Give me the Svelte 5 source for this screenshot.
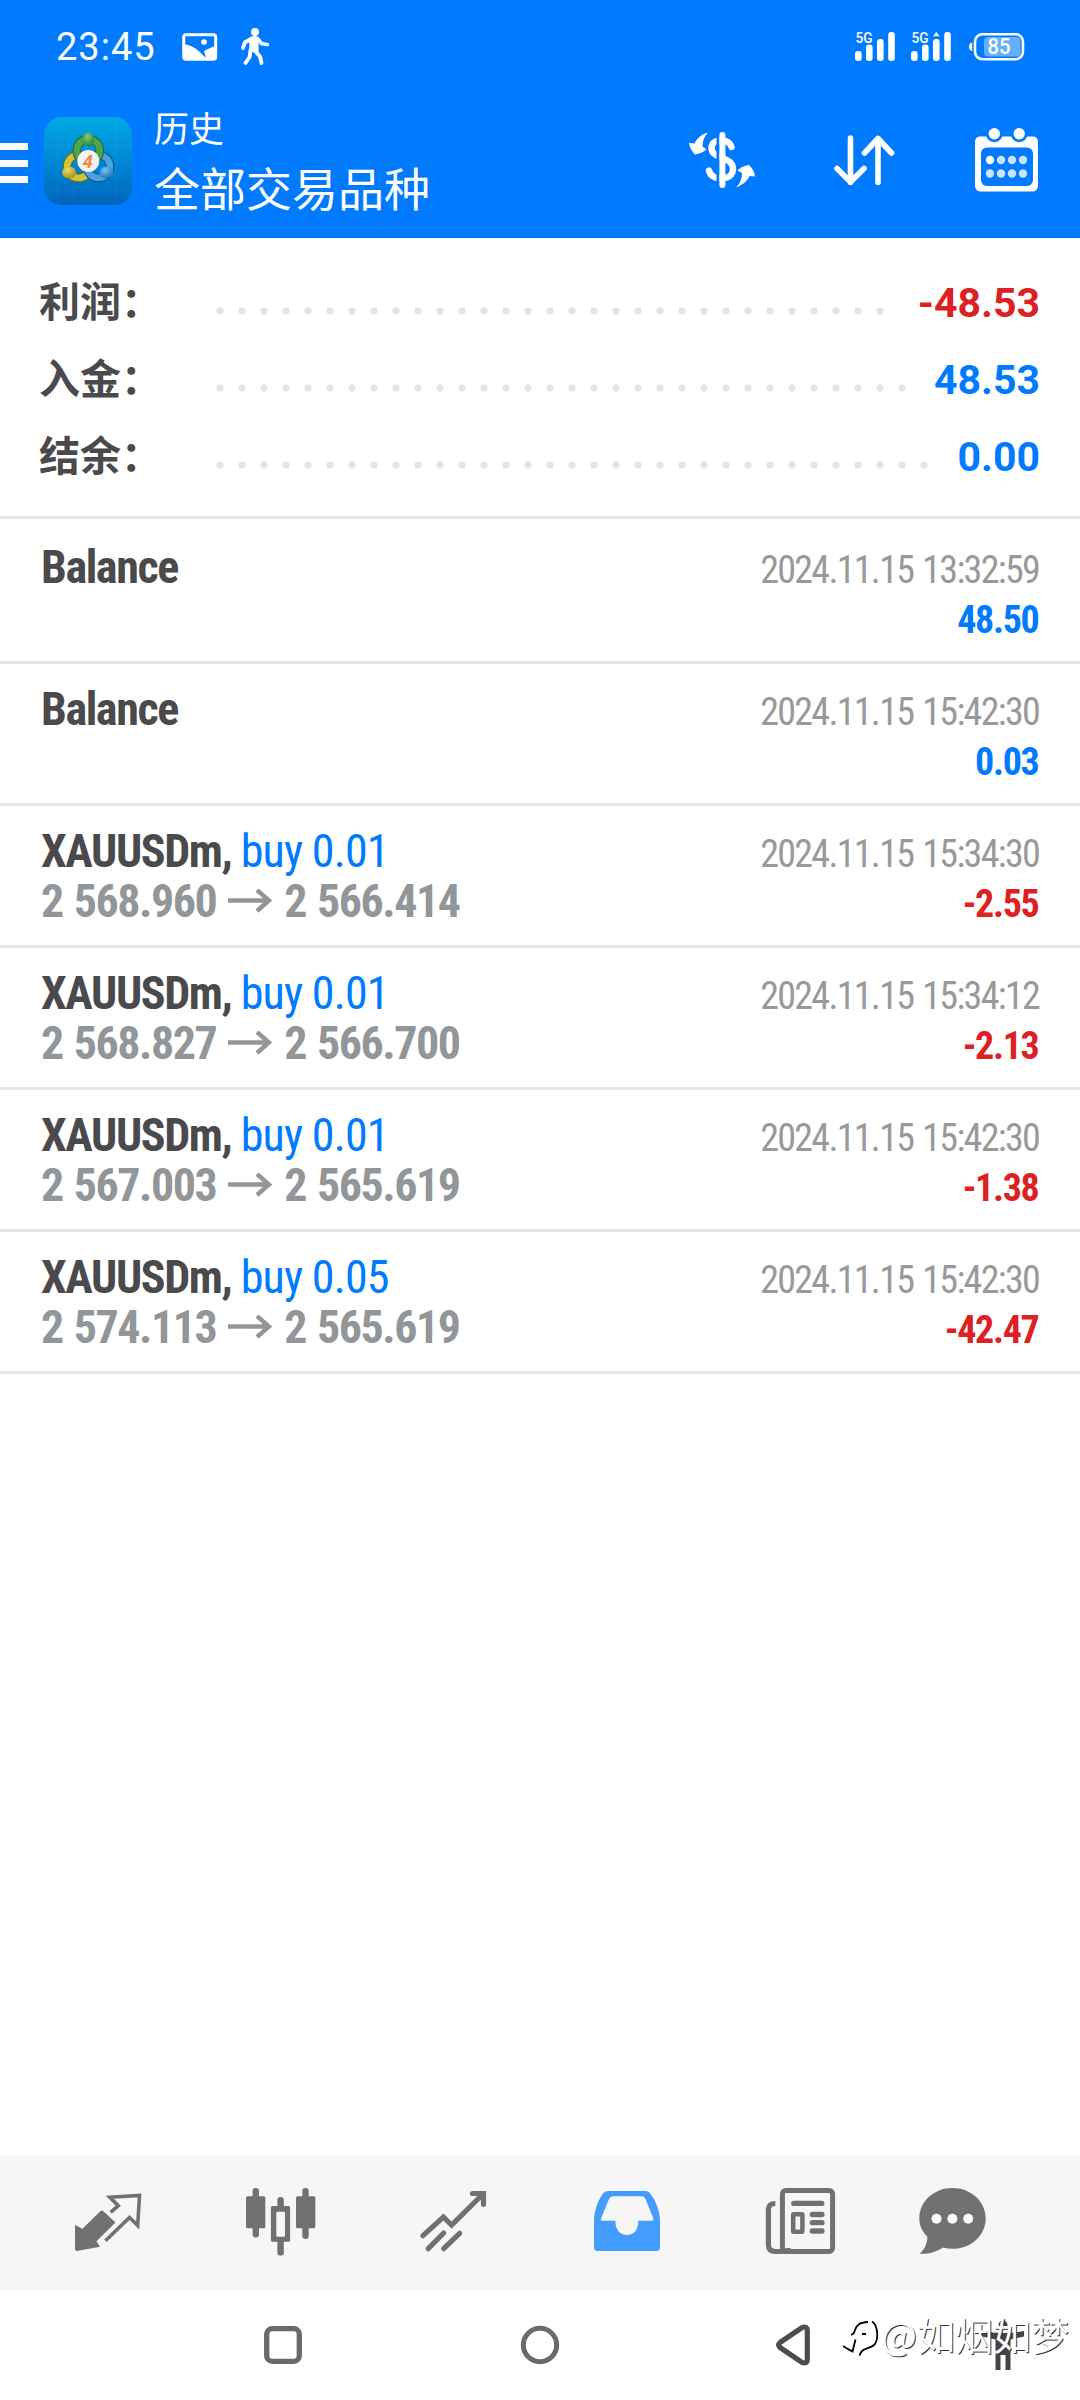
<script lang="ts">
  interface Deal {
    symbol: string;
    side?: string;
    open?: string;
    close?: string;
    time: string;
    profit: string;
  }

  const totals = [
    { label: '利润：', value: '-48.53' },
    { label: '入金：', value: '48.53' },
    { label: '结余：', value: '0.00' }
  ];

  const deals: Deal[] = [
    { symbol: 'Balance', time: '2024.11.15 13:32:59', profit: '48.50' },
    { symbol: 'Balance', time: '2024.11.15 15:42:30', profit: '0.03' },
    { symbol: 'XAUUSDm,', side: 'buy 0.01', open: '2 568.960', close: '2 566.414', time: '2024.11.15 15:34:30', profit: '-2.55' },
    { symbol: 'XAUUSDm,', side: 'buy 0.01', open: '2 568.827', close: '2 566.700', time: '2024.11.15 15:34:12', profit: '-2.13' },
    { symbol: 'XAUUSDm,', side: 'buy 0.01', open: '2 567.003', close: '2 565.619', time: '2024.11.15 15:42:30', profit: '-1.38' },
    { symbol: 'XAUUSDm,', side: 'buy 0.05', open: '2 574.113', close: '2 565.619', time: '2024.11.15 15:42:30', profit: '-42.47' }
  ];

  const isLoss = (value: string): boolean => value.startsWith('-');
</script>

{#snippet signal(roaming: boolean)}
  <svg class="signal" width="40" height="42" viewBox="0 -6 40 42" fill="#fff">
    <text x="0.5" y="11" class="net" textLength="17" lengthAdjust="spacingAndGlyphs">5G</text>
    <rect x="0" y="19" width="6.6" height="10" rx="3" />
    <rect x="11" y="12.5" width="6.6" height="16.5" rx="3" />
    <rect x="22" y="7" width="6.6" height="22" rx="3" />
    <rect x="33.2" y="0" width="6.6" height="29" rx="3" />
    {#if roaming}
      <path d="M22 4.3 25.3 0l3.3 4.3z" />
    {/if}
  </svg>
{/snippet}

<div class="screen">
  <header>
    <div class="status">
      <span class="clock">23:45</span>
      <svg class="photo" width="36" height="28" viewBox="0 0 36 28">
        <rect x="1.7" y="1.7" width="32" height="24.6" rx="2.5" fill="none" stroke="#fff" stroke-width="3" />
        <path d="M2 11.5C9 12 14 15 20 21l4 4-2-7c4-2 7-4 12-5v13H2z" fill="#fff" />
        <circle cx="22" cy="9" r="2.8" fill="#fff" />
      </svg>
      <svg class="walk" width="28" height="38" viewBox="0 0 28 38">
        <circle cx="14" cy="4" r="4" fill="#fff" />
        <path d="M9 11.5C11 9.5 16 9 18 12l2.5 3.5 6 1.2" fill="none" stroke="#fff" stroke-width="3.6" stroke-linecap="round" stroke-linejoin="round" />
        <path d="M9 11.5 3.8 14.5 2 20M9.5 22 8.6 29 4.5 35M14.5 23.5l4.5 5 1.5 6.5" fill="none" stroke="#fff" stroke-width="3.8" stroke-linecap="round" stroke-linejoin="round" />
        <path d="M8.5 11.5 17.5 11l.2 13.5L8 24z" fill="#fff" />
      </svg>
      <div class="status-right">
        {@render signal(false)}
        {@render signal(true)}
        <svg width="56" height="28" viewBox="0 0 56 28">
          <path d="M3.2 9.5v8.4C.9 17.5 0 16 0 13.7s.9-3.8 3.2-4.2z" fill="#fff" />
          <rect x="6" y="1.2" width="48" height="25" rx="7.5" fill="none" stroke="#fff" stroke-width="2.6" />
          <rect x="15" y="4" width="36.5" height="19.5" rx="4" fill="#66afff" />
          <text x="18.5" y="20.5" class="level" textLength="23" lengthAdjust="spacingAndGlyphs">85</text>
        </svg>
      </div>
    </div>

    <div class="appbar">
      <div class="burger"><i></i><i></i><i></i></div>
      <svg class="logo" width="88" height="88" viewBox="0 0 88 88">
        <defs>
          <linearGradient id="bg" x1="0" y1="0" x2="0" y2="1">
            <stop offset="0" stop-color="#00a9e4" />
            <stop offset="0.5" stop-color="#0088d6" />
            <stop offset="1" stop-color="#0064b8" />
          </linearGradient>
          <radialGradient id="green" cx="0.4" cy="0.3" r="0.8">
            <stop offset="0" stop-color="#7fd069" />
            <stop offset="1" stop-color="#1a7a35" />
          </radialGradient>
          <radialGradient id="yellow" cx="0.4" cy="0.3" r="0.8">
            <stop offset="0" stop-color="#f0e060" />
            <stop offset="1" stop-color="#96870f" />
          </radialGradient>
          <radialGradient id="blue" cx="0.4" cy="0.3" r="0.8">
            <stop offset="0" stop-color="#79c6f2" />
            <stop offset="1" stop-color="#1268ae" />
          </radialGradient>
        </defs>
        <rect width="88" height="88" rx="18" fill="url(#bg)" />
        <path d="M14 0v88M30 60v28M0 29h88M0 73h88M72 0v88" stroke="#fff" stroke-opacity="0.06" />
        <g fill="none">
          <circle cx="34.5" cy="49.5" r="11.5" stroke="#6d6714" stroke-width="8.5" />
          <circle cx="34.5" cy="49.5" r="11.5" stroke="#cfc43c" stroke-width="6.5" />
          <circle cx="54.5" cy="49.5" r="11.5" stroke="#0b4e8c" stroke-width="8.5" />
          <circle cx="54.5" cy="49.5" r="11.5" stroke="#4aa3de" stroke-width="6.5" />
          <circle cx="44.3" cy="33.5" r="11.5" stroke="#1c6a2c" stroke-width="8.5" />
          <circle cx="44.3" cy="33.5" r="11.5" stroke="#4aa64c" stroke-width="6.5" />
        </g>
        <ellipse cx="44.5" cy="22.5" rx="5.8" ry="7" fill="url(#green)" />
        <ellipse cx="25" cy="55.5" rx="7" ry="6" fill="url(#yellow)" />
        <ellipse cx="62.5" cy="55.5" rx="7" ry="6" fill="url(#blue)" />
        <circle cx="44.3" cy="44" r="11" fill="#f3f3f3" />
        <text x="38.8" y="50.5" class="four">4</text>
      </svg>
      <div class="titles">
        <span class="section">历史</span>
        <span class="filter">全部交易品种</span>
      </div>
      <div class="actions">
        <svg width="66" height="58" viewBox="0 0 66 58">
          <g fill="none" stroke="#fff">
            <path d="M42.5 15C41 9.5 36.5 8.5 32 8.5 25.5 8.5 22.5 12 22.5 16 22.5 21 26 23 32 25.5 40 28.5 44 31 44 37 44 43 39 46.5 32 46.5 25 46.5 21 43 20 38.5" stroke-width="6.4" stroke-linecap="round" />
            <path d="M29 1v53" stroke="#007aff" stroke-width="3" />
            <path d="M33.4 3v50" stroke-width="6" stroke-linecap="round" />
          </g>
          <path d="M19 .5C13 2 8 6 5.5 11.5L0 11c.5 4 3 8.5 6 11.5 4-.5 9-2.5 11.5-5.2L13.5 14.5C13.5 9 15.5 4 19 .5z" fill="#fff" />
          <path d="M47 55.5C53 53 58 49.5 60.5 44l5.5.5c-.5-4.5-2.5-8.5-6-11.5-4 .5-9 2.5-11.5 5.5l4.5 2.5C53 47 51 51.5 47 55.5z" fill="#fff" />
        </svg>
        <svg width="62" height="52" viewBox="0 0 62 52">
          <path d="M16.5 3v44.5M3 33.5 16.5 47 30 33.5M44 47.5V4M30.5 18 44 3.5 57.5 18" fill="none" stroke="#fff" stroke-width="5.6" stroke-linecap="round" stroke-linejoin="round" />
        </svg>
        <svg class="calendar" width="64" height="64" viewBox="0 0 64 64">
          <path d="M5 8.5H58a5 5 0 0 1 5 5V58a5.5 5.5 0 0 1-5.5 5.5h-52A5.5 5.5 0 0 1 0 58V13.5a5 5 0 0 1 5-5z" fill="#fff" />
          <circle cx="19.3" cy="5.8" r="8.4" fill="#007aff" />
          <circle cx="44.2" cy="5.8" r="8.4" fill="#007aff" />
          <circle cx="19.3" cy="5.8" r="5.7" fill="#fff" />
          <circle cx="44.2" cy="5.8" r="5.7" fill="#fff" />
          <rect x="6" y="19.5" width="52" height="38.5" rx="6" fill="#007aff" />
          {#each [15, 26, 37, 48] as cx, i}
            <circle {cx} cy="32" r="4.2" fill={i === 0 ? '#fff' : '#cce4ff'} />
            <circle {cx} cy="45.5" r="4.2" fill="#cce4ff" />
          {/each}
        </svg>
      </div>
    </div>
  </header>

  <main>
    <section class="summary">
      {#each totals as row}
        <div class="total">
          <span class="label">{row.label}</span>
          <span class="dots"></span>
          <span class="value" class:loss={isLoss(row.value)}>{row.value}</span>
        </div>
      {/each}
    </section>

    <section class="history">
      {#each deals as deal}
        <article class="deal">
          <div class="line">
            <div class="name"><b>{deal.symbol}</b>{#if deal.side}<span class="side">{deal.side}</span>{/if}</div>
            <time>{deal.time}</time>
          </div>
          <div class="line">
            {#if deal.open}
              <div class="prices">
                <span>{deal.open}</span>
                <svg width="44" height="24" viewBox="0 0 44 24">
                  <path d="M0 11.5h41M29 1 41 11.5 29 22" fill="none" stroke="#939698" stroke-width="4.4" />
                </svg>
                <span>{deal.close}</span>
              </div>
            {/if}
            <span class="profit" class:loss={isLoss(deal.profit)}>{deal.profit}</span>
          </div>
        </article>
      {/each}
    </section>
  </main>

  <nav class="tabs">
    <div class="tab">
      <svg width="72" height="72" viewBox="0 0 72 72">
        <path d="M4 39.5 10.5 42.7 28.5 25q1.3-1 2.6 0L42.5 35.5q1 1 0 2L24.5 55.3 28 60.7 5 65q-2 0-2-2V39z" fill="#717171" />
        <path d="M38.7 26.3 46.3 19.7 37.8 11.3 67.5 9.5 65.7 39.5 57.5 31.5 33.5 54.7" fill="none" stroke="#717171" stroke-width="3.6" />
      </svg>
    </div>
    <div class="tab">
      <svg width="72" height="72" viewBox="0 0 72 72" fill="#717171">
        <rect x="1" y="10.3" width="19.3" height="32" rx="1.5" />
        <rect x="7.6" y="2" width="6.4" height="49.5" rx="3" />
        <path fill-rule="evenodd" d="M27.4 20h16.2q1.5 0 1.5 1.5v32.7q0 1.5-1.5 1.5H27.4q-1.5 0-1.5-1.5V21.5q0-1.5 1.5-1.5zM31.3 27v22.4q0 1.3 1.3 1.3h6.1q1.3 0 1.3-1.3V27q0-1.3-1.3-1.3h-6.1q-1.3 0-1.3 1.3z" />
        <path d="M32.4 20.5V14q0-3 3.2-3t3.2 3v6.5zM32.4 55v12q0 2.6 3.2 2.6t3.2-2.6V55z" />
        <rect x="51" y="10.3" width="19.3" height="32" rx="1.5" />
        <rect x="57.3" y="2" width="6.4" height="51" rx="3" />
      </svg>
    </div>
    <div class="tab">
      <svg width="72" height="72" viewBox="0 0 72 72" fill="none" stroke="#717171" stroke-width="5.2" stroke-linecap="round">
        <path d="M5 49.7 25.4 31 33.6 39 65 8M54.5 7.5H65.5V18.3M10.2 62.7 25.7 47M25.7 62.7 41.6 47.3" />
      </svg>
    </div>
    <div class="tab">
      <svg width="72" height="72" viewBox="0 0 72 72">
        <path fill-rule="evenodd" d="M17 5H55q2 0 3.3 1.5C64 13 68.5 24 69 33V61.5q0 3.5-3.5 3.5h-59Q3 65 3 61.5V33C3.5 23 8 12 13 6.5Q14.5 5 17 5zM22 10.3q-2.8 0-4 2.7L10 32.5q-.7 2.2 1.5 2.2H24.3C24.5 44 29 49 36 49s11.2-5 11.3-14.3H61q2 0 1.4-2.2L54.5 13q-1-2.7-3.7-2.7z" fill="#459cff" />
      </svg>
    </div>
    <div class="tab">
      <svg width="72" height="72" viewBox="0 0 72 72" fill="none" stroke="#717171">
        <rect x="18.4" y="4.5" width="50.2" height="61" rx="3.5" stroke-width="5" />
        <path d="M11.4 17.5Q4.4 17.5 4.4 24V58.5q0 7 7 7H24V62" stroke-width="5.2" />
        <path d="M29.8 17.4H57.8M48.3 28.5H58M48.3 36.7H58M48.3 45H58" stroke-width="5.3" stroke-linecap="round" />
        <rect x="29.2" y="28.2" width="9.2" height="17.5" rx="0.5" stroke-width="4.5" stroke-linejoin="round" />
      </svg>
    </div>
    <div class="tab">
      <svg class="chat" width="72" height="72" viewBox="0 0 72 72">
        <path d="M35.5 2C54 2 68.7 15.5 68.7 32.4S54 62.7 35.5 62.7q-5 0-9.5-1.3C19 66 10 68.5 2.5 67.7 8 63 10.5 57 10.3 50.5 5.5 46 2.3 39.5 2.3 32.4 2.3 15.5 17 2 35.5 2z" fill="#717171" />
        <g fill="#fff">
          <circle cx="19.5" cy="32.7" r="5" />
          <circle cx="35.4" cy="32.7" r="5" />
          <circle cx="51.2" cy="32.7" r="5" />
        </g>
      </svg>
    </div>
  </nav>

  <footer>
    <svg class="recents" width="38" height="38" viewBox="0 0 38 38">
      <rect x="2.7" y="2.7" width="32.6" height="32.6" rx="5.5" fill="none" stroke="#6a6a6a" stroke-width="5.3" />
    </svg>
    <svg class="home" width="40" height="40" viewBox="0 0 40 40">
      <circle cx="20" cy="20" r="16.7" fill="none" stroke="#6a6a6a" stroke-width="5" />
    </svg>
    <svg class="back" width="34" height="42" viewBox="0 0 34 42">
      <path d="M4 18.5 26 3.7Q31.3 1.5 31.3 7V35q0 5.5-5.3 3.3L4 23.5Q1.5 21 4 18.5z" fill="none" stroke="#4c4c4c" stroke-width="5.2" stroke-linejoin="round" />
    </svg>
    <svg class="assist" width="44" height="52" viewBox="0 0 44 52" fill="#444">
      <circle cx="22" cy="6" r="4.5" />
      <path d="M1 12q21 4 42 0v5.5l-13.5 3V51H24.500V36h-5V51h-5V20.5L1 17.5z" />
    </svg>
    <div class="watermark">
      <svg width="38" height="40" viewBox="0 0 38 40" fill="none" stroke="#000" stroke-width="1.8">
        <path d="M29 4.500C35 8 36 23 31 28 26 32.500 19 30 16.500 38.500M8 17.500C11 18 11 16 12 13 14 7 17 5.500 25 5M19 17H23M0 29C4 32 7 33 9.500 34.500L12.500 22.500" />
      </svg>
      <span>@如烟如梦</span>
    </div>
  </footer>
</div>

<style>
  :global(body) {
    margin: 0;
    background: #fff;
  }

  .screen {
    display: flex;
    flex-direction: column;
    width: 1080px;
    height: 2400px;
    overflow: hidden;
    background: #fff;
    font-family: Roboto, 'Noto Sans CJK SC', sans-serif;
    color: #4a4a4c;
  }

  svg {
    display: block;
    flex: none;
  }

  header {
    height: 237px;
    border-bottom: 1px solid #0070ea;
    background: #007aff;
    color: #fff;
  }

  .status {
    display: flex;
    align-items: center;
    height: 94px;
    padding: 0 55px 0 56px;
    box-sizing: border-box;
  }

  .clock {
    width: 126px;
    font-size: 38px;
    font-weight: 450;
    letter-spacing: 1px;
  }

  .walk {
    margin-left: 23px;
  }

  .status-right {
    display: flex;
    align-items: center;
    margin-left: auto;
  }

  .signal {
    margin-right: 16px;
  }

  .signal + .signal {
    margin-right: 18px;
  }

  .net {
    font-size: 15px;
    font-weight: 500;
  }

  .level {
    font-size: 22px;
    font-weight: 500;
    fill: #fff;
  }

  .appbar {
    display: flex;
    align-items: center;
    height: 134px;
  }

  .burger {
    display: flex;
    flex-direction: column;
    gap: 9.5px;
    width: 28px;
    margin: 4px 16px 0 0;
  }

  .burger i {
    height: 7px;
    background: #fff;
  }

  .four {
    font-size: 18px;
    font-weight: 700;
    font-style: italic;
    fill: #f08a35;
  }

  .titles {
    display: flex;
    flex-direction: column;
    margin: -4px 0 0 22px;
    font-family: 'Noto Sans CJK SC', sans-serif;
  }

  .section {
    font-size: 35px;
    line-height: 54px;
  }

  .filter {
    font-size: 46px;
    line-height: 65px;
  }

  .actions {
    display: flex;
    align-items: center;
    margin-left: auto;
    padding-right: 41px;
    gap: 79px;
  }

  .calendar {
    margin-top: -2px;
  }

  .summary {
    height: 255px;
    padding: 23px 40px 0 39px;
    border-bottom: 3px solid #e6e6e6;
  }

  .total {
    display: flex;
    align-items: baseline;
    height: 77px;
    line-height: 77px;
    font-size: 41px;
    font-weight: 700;
  }

  .label {
    width: 170px;
    font-family: 'Noto Sans CJK SC', sans-serif;
  }

  .dots {
    flex: 1;
    align-self: flex-start;
    height: 8px;
    margin: 46px 20px 0 0;
    background: radial-gradient(circle, #e4e4e4 3.2px, transparent 4px) 0 0 / 22px 8px repeat-x;
  }

  .value {
    color: #007aff;
  }

  .history {
    padding-top: 3px;
    font-stretch: 75%;
    font-family: 'Roboto Condensed', Roboto, sans-serif;
  }

  .deal {
    height: 119px;
    padding: 20px 41px 0;
    border-bottom: 3px solid #e6e6e6;
  }

  .line {
    display: flex;
    align-items: baseline;
    justify-content: space-between;
    height: 50px;
    line-height: 50px;
    font-size: 46px;
    letter-spacing: -1.4px;
  }

  /* keeps the baseline when a line has only its small text */
  .line::before {
    content: '\200b';
    width: 0;
  }

  .name {
    margin-right: auto;
  }

  .side {
    margin-left: 9.5px;
    letter-spacing: -0.9px;
    color: #007aff;
  }

  .prices {
    display: flex;
    align-items: center;
    gap: 12px;
    font-weight: 700;
    letter-spacing: -1.5px;
    word-spacing: 2px;
    color: #939698;
  }

  time {
    font-size: 38px;
    letter-spacing: -1.7px;
    word-spacing: 2px;
    color: #98999b;
  }

  .profit {
    margin: 0 0.5px 0 auto;
    font-size: 38px;
    font-weight: 700;
    letter-spacing: -1.3px;
    color: #007aff;
  }

  .loss {
    color: #dd2022;
  }

  .tabs {
    display: flex;
    height: 104px;
    margin-top: auto;
    padding: 31px 21px 0;
    background: #f6f6f6;
  }

  .tab {
    display: flex;
    justify-content: center;
    width: 173px;
  }

  .chat {
    margin-right: 40px;
  }

  footer {
    position: relative;
    display: flex;
    align-items: center;
    height: 110px;
  }

  .recents {
    margin-left: 264px;
  }

  .home {
    margin-left: 218px;
  }

  .back {
    margin-left: 216px;
  }

  .assist {
    margin-left: 171px;
  }

  /* sits over the assist icon */
  .watermark {
    position: absolute;
    top: 17px;
    left: 843px;
    display: flex;
    align-items: center;
    font: 38px/54px 'Noto Sans CJK SC', sans-serif;
    color: #fff;
    text-shadow: 1px 1px 0 #333;
    white-space: nowrap;
  }

  .watermark svg {
    margin-top: 6px;
  }
</style>
